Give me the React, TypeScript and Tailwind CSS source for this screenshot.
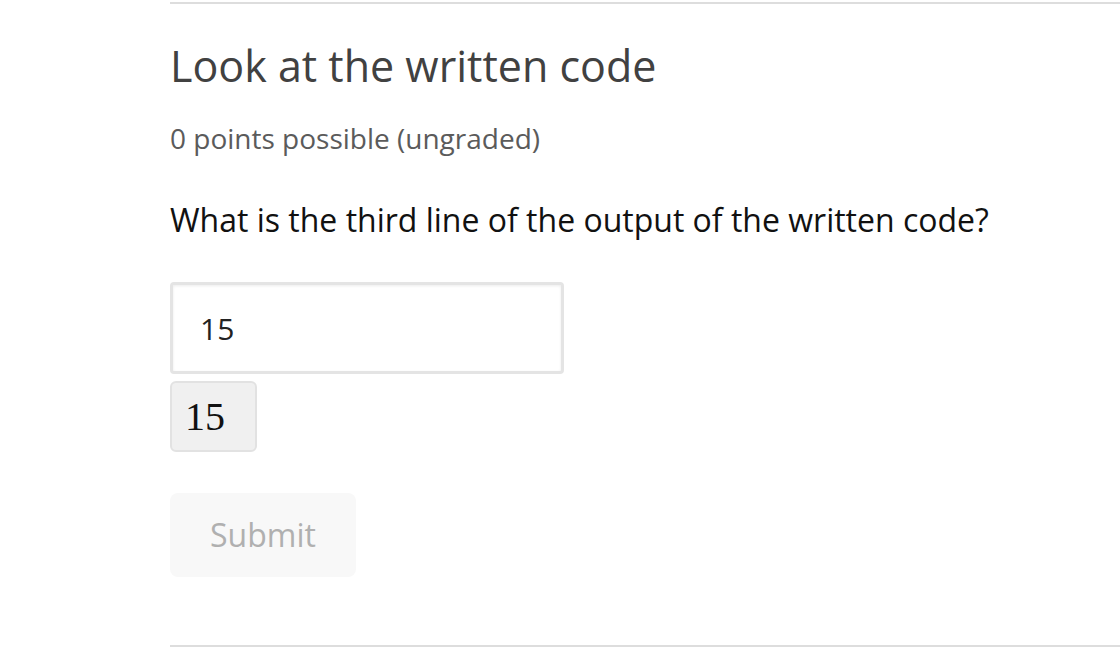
export default function App() {
  return (
    <div className="min-h-[658px] bg-white" style={{ fontFamily: '"Open Sans", sans-serif' }}>
      <div className="ml-[170px] pt-[2px]">
        <div className="border-t-2 border-[#dddddd]" />
        <h2 className="mt-[34px] text-[43px] leading-[56px] text-[#414141]">Look at the written code</h2>
        <p className="mt-[26px] text-[28px] leading-[36px] text-[#5b5b5b]">0 points possible (ungraded)</p>
        <p className="mt-[42px] text-[32px] leading-[44px] text-[#111111]">
          What is the third line of the output of the written code?
        </p>
        <div className="mt-[40px] flex h-[92px] w-[394px] items-center rounded-[4px] border-[3px] border-[#e4e4e4] bg-white pl-[27px] text-[30px] text-[#222] shadow-[inset_0_1px_3px_rgba(0,0,0,0.08)]">
          15
        </div>
        <div
          className="mt-[7px] flex h-[71px] w-[87px] items-center rounded-[6px] border-2 border-[#e2e2e2] bg-[#f0f0f0] pl-[13px] text-[40px] text-[#111]"
          style={{ fontFamily: '"Liberation Serif", serif' }}
        >
          15
        </div>
        <button className="mt-[41px] h-[84px] w-[186px] rounded-[8px] bg-[#f8f8f8] text-[32px] text-[#b0b0b0]">
          Submit
        </button>
        <div className="mt-[68px] border-t-2 border-[#dddddd]" />
      </div>
    </div>
  )
}
